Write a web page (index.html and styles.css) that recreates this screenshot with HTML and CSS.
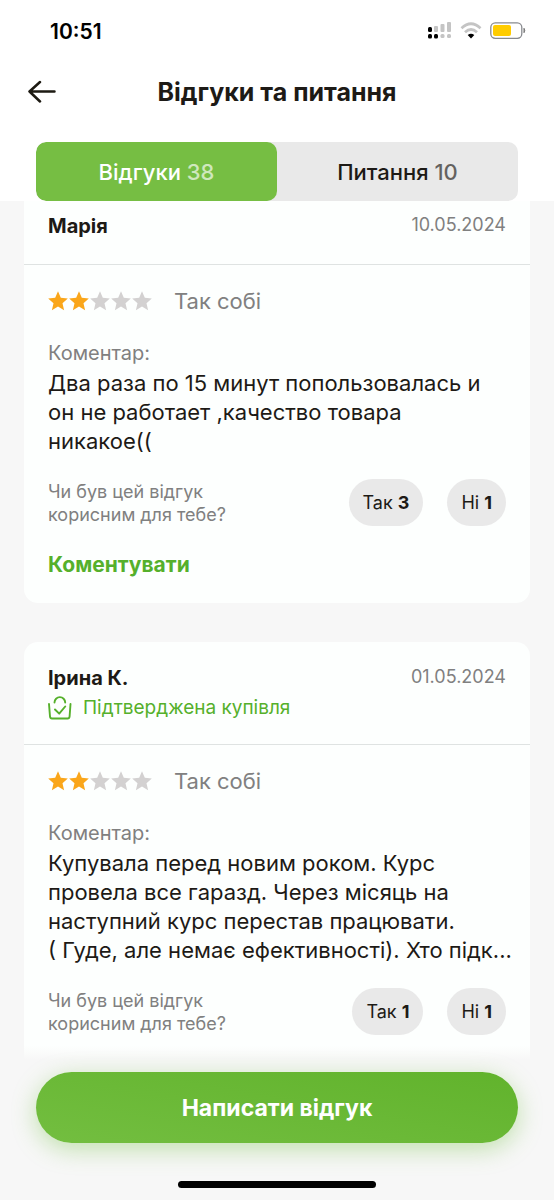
FILE: index.html
```html
<!DOCTYPE html>
<html lang="uk">
<head>
<meta charset="utf-8">
<meta name="viewport" content="width=device-width, initial-scale=1">
<title>Відгуки та питання</title>
<link rel="stylesheet" href="styles.css">
</head>
<body>
<svg class="defs" aria-hidden="true">
  <symbol id="star" viewBox="0 0 20 20"><path d="M10 .3l2.800 6.500 7 .7-5.300 4.700 1.600 7L10 15.600l-6.100 3.600 1.600-7L.2 7.500l7-.7z" fill="currentColor"/></symbol>
</svg>
<header class="top">
  <div class="status">
    <span class="clock">10:51</span>
    <div class="indicators">
      <svg width="24" height="18" viewBox="0 0 24 18" aria-hidden="true">
        <g fill="#c4c4c4"><rect x="6" y="4" width="4" height="6" rx="1"/><rect x="12.500" y="2" width="4" height="8" rx="1"/><rect x="19" y="0" width="4" height="10" rx="1"/><rect x="12.500" y="12" width="4" height="4" rx="1.500"/><rect x="19" y="12" width="4" height="4" rx="1.500"/></g>
        <g fill="#000"><rect x="0" y="5" width="4" height="5" rx="1.500"/><rect x="0" y="12" width="4" height="4.500" rx="1.500"/><rect x="6" y="12" width="4" height="4.500" rx="1.500"/></g>
      </svg>
      <svg width="22" height="18" viewBox="0 0 22 18" aria-hidden="true">
        <g fill="none" stroke="#c4c4c4" stroke-width="2.800"><path d="M1.500 6.200Q11-2.600 20.500 6.200"/><path d="M5 10.200q6-5.400 12 0"/></g>
        <path d="M11 16.500l-3.300-3.600q3.300-2.500 6.600 0z" fill="#000"/>
      </svg>
      <svg width="36" height="18" viewBox="0 0 36 18" aria-hidden="true">
        <rect x=".8" y=".8" width="31" height="15.500" rx="4.500" fill="#fff" stroke="#888a8f" stroke-width="1.300"/>
        <rect x="3" y="3" width="18" height="11" rx="2" fill="#fc0"/>
        <path d="M34 6.300q1.500 2.200 0 4.400z" fill="#777" stroke="#777"/>
      </svg>
    </div>
  </div>
  <div class="titlebar">
    <button class="back" type="button" aria-label="Назад">
      <svg width="28" height="24" viewBox="0 0 28 24" fill="none" stroke="#1d1a12" stroke-width="2.500" stroke-linecap="round" stroke-linejoin="round" aria-hidden="true"><path d="M26.500 11.500H1.500M12 2L1.500 11.500 12 21.500"/></svg>
    </button>
    <h1 class="title">Відгуки та питання</h1>
  </div>
  <nav class="tabs">
    <button class="tab tab-active" type="button">Відгуки <span class="count">38</span></button>
    <button class="tab" type="button">Питання <span class="count">10</span></button>
  </nav>
</header>
<main class="reviews">
  <article class="card card-scrolled">
    <header class="card-head">
      <div class="meta"><h2 class="author">Марія</h2><time class="date" datetime="2024-05-10">10.05.2024</time></div>
    </header>
    <div class="card-body">
      <div class="rating">
        <span class="stars" role="img" aria-label="2 з 5"><svg class="star on"><use href="#star"/></svg><svg class="star on"><use href="#star"/></svg><svg class="star"><use href="#star"/></svg><svg class="star"><use href="#star"/></svg><svg class="star"><use href="#star"/></svg></span>
        <span>Так собі</span>
      </div>
      <div class="label">Коментар:</div>
      <p class="comment">Два раза по 15 минут попользовалась и<br>он не работает ,качество товара<br>никакое((</p>
      <div class="helpful">
        <span class="question">Чи був цей відгук<br>корисним для тебе?</span>
        <div class="votes"><button class="vote" type="button">Так <b>3</b></button><button class="vote" type="button">Ні <b>1</b></button></div>
      </div>
      <a class="reply" href="#">Коментувати</a>
    </div>
  </article>
  <article class="card card-cut">
    <header class="card-head">
      <div class="meta"><h2 class="author">Ірина К.</h2><time class="date" datetime="2024-05-01">01.05.2024</time></div>
      <div class="verified">
        <svg width="24" height="24" viewBox="0 0 24 24" fill="none" stroke="currentColor" stroke-width="1.900" stroke-linecap="round" stroke-linejoin="round" aria-hidden="true"><path d="M1 8l1 12.500q.2 2 2 2h15.600q1.800 0 2-2L22.500 8M6.500 6.500a5.300 5.300 0 0 1 10.700 0M7 13.500l4.200 4.200 6-7.200"/></svg>
        <span>Підтверджена купівля</span>
      </div>
    </header>
    <div class="card-body">
      <div class="rating">
        <span class="stars" role="img" aria-label="2 з 5"><svg class="star on"><use href="#star"/></svg><svg class="star on"><use href="#star"/></svg><svg class="star"><use href="#star"/></svg><svg class="star"><use href="#star"/></svg><svg class="star"><use href="#star"/></svg></span>
        <span>Так собі</span>
      </div>
      <div class="label">Коментар:</div>
      <p class="comment">Купувала перед новим роком. Курс<br>провела все гаразд. Через місяць на<br>наступний курс перестав працювати.<br>( Гуде, але немає ефективності). Хто підк...</p>
      <div class="helpful">
        <span class="question">Чи був цей відгук<br>корисним для тебе?</span>
        <div class="votes"><button class="vote" type="button">Так <b>1</b></button><button class="vote" type="button">Ні <b>1</b></button></div>
      </div>
    </div>
  </article>
</main>
<footer class="bottom">
  <button class="write" type="button">Написати відгук</button>
  <div class="home"></div>
</footer>
</body>
</html>
```
FILE: styles.css
```css
* { box-sizing: border-box; }
body {
  margin: 0;
  min-height: 100vh;
  display: flex;
  flex-direction: column;
  background: #f7f7f7;
  color: #1d1a16;
  font-family: Inter, "Open Sans", sans-serif;
  font-size: 22px;
}
button { border: 0; padding: 0; color: inherit; font: inherit; background: none; cursor: pointer; }
h1, h2, p { margin: 0; }
.defs { display: none; }

.top { background: #fff; padding: 0 36px; }
.status { height: 62px; display: flex; align-items: center; justify-content: space-between; padding-left: 14px; margin-right: -8px; }
.clock { font-size: 21px; font-weight: 600; color: #000; }
.indicators { display: flex; gap: 8px; }
.titlebar { height: 60px; display: grid; grid-template-columns: 28px 1fr 28px; align-items: center; margin: 0 -8px 20px; }
.back { display: flex; }
.title { text-align: center; font-size: 25px; line-height: 32px; font-weight: 700; }
.tabs { display: flex; background: #e9e9e9; border-radius: 10px; overflow: hidden; }
.tab { flex: 1; height: 59px; border-radius: 10px; font-weight: 500; }
.tab-active { background: #76be43; color: #fff; }
.count { opacity: .65; }

.reviews { padding: 0 24px; display: flex; flex-direction: column; gap: 39px; }
.card { background: #fdfffe; border-radius: 14px; }
.card-scrolled { border-top-left-radius: 0; border-top-right-radius: 0; }
.card-cut {
  border-bottom-left-radius: 0;
  border-bottom-right-radius: 0;
  background: linear-gradient(#fdfffe calc(100% - 14px), #f7f7f7);
}
.card-head { padding: 24px 24px 21px; border-bottom: 1px solid #dfe3e2; }
.card-scrolled .card-head { padding: 13px 24px 26px; }
.meta { display: flex; justify-content: space-between; align-items: flex-start; }
.author { font-size: 20px; line-height: 24px; font-weight: 700; }
.date { font-size: 18px; line-height: 22px; color: #808080; }
.verified { display: flex; align-items: center; gap: 11px; margin-top: 3px; font-size: 19px; line-height: 30px; color: #55b02b; }
.card-body { padding: 24px 24px 23px; }
.card-cut .card-body { padding-bottom: 25px; }
.rating { display: flex; align-items: center; gap: 22px; line-height: 24px; color: #808080; margin-bottom: 24px; }
.stars { display: flex; gap: 1px; }
.star { width: 20px; height: 20px; color: #d3d1d1; }
.on { color: #faa61a; }
.label { font-size: 20px; line-height: 32px; color: #808080; }
.comment { line-height: 29px; white-space: nowrap; }
.helpful { display: flex; align-items: center; justify-content: space-between; margin-top: 23px; }
.question { font-size: 18px; line-height: 23px; color: #808080; }
.votes { display: flex; gap: 24px; }
.vote { height: 47px; padding: 0 14px; border-radius: 24px; background: #e9e9e9; font-size: 18px; }
.reply { display: block; margin-top: 24px; font-size: 21px; line-height: 30px; font-weight: 700; color: #55b02b; text-decoration: none; }

.bottom {
  flex: 1;
  display: flex;
  flex-direction: column;
  align-items: center;
  justify-content: space-between;
  padding: 12px 36px 12px;
}
.write {
  width: 100%;
  height: 71px;
  border-radius: 36px;
  color: #fff;
  font-size: 23px;
  font-weight: 700;
  background: linear-gradient(190deg, #61b32c, #73be40);
  box-shadow: 0 6px 24px rgba(110, 190, 60, .4);
}
.home { width: 198px; height: 7px; border-radius: 4px; background: #000; }
```
